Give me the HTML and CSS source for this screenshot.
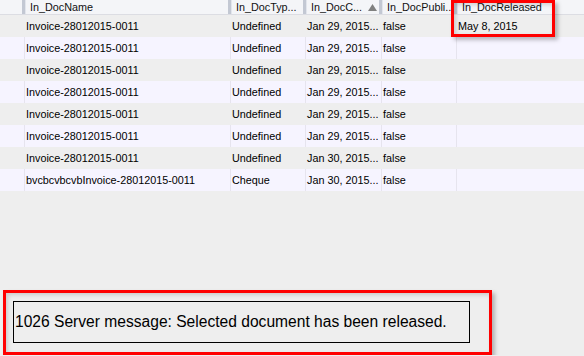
FILE: index.html
```html
<!DOCTYPE html>
<html lang="en">
<head>
    <meta charset="UTF-8">
    <title>Documents</title>
    <link rel="stylesheet" href="styles.css">
</head>
<body>
    <div class="table">
        <div class="row head">
            <div class="cell"></div>
            <div class="cell">In_DocName</div>
            <div class="cell">In_DocTyp...</div>
            <div class="cell sorted">In_DocC... <svg class="arrow" width="9" height="7" viewBox="0 0 9 7"><path d="M0 7 L4.5 0 L9 7 Z" fill="#808080"/></svg></div>
            <div class="cell">In_DocPubli...</div>
            <div class="cell">In_DocReleased</div>
        </div>
        <div class="row odd">
            <div class="cell"></div>
            <div class="cell">Invoice-28012015-0011</div>
            <div class="cell">Undefined</div>
            <div class="cell">Jan 29, 2015...</div>
            <div class="cell">false</div>
            <div class="cell">May 8, 2015</div>
        </div>
        <div class="row even">
            <div class="cell"></div>
            <div class="cell">Invoice-28012015-0011</div>
            <div class="cell">Undefined</div>
            <div class="cell">Jan 29, 2015...</div>
            <div class="cell">false</div>
            <div class="cell"></div>
        </div>
        <div class="row odd">
            <div class="cell"></div>
            <div class="cell">Invoice-28012015-0011</div>
            <div class="cell">Undefined</div>
            <div class="cell">Jan 29, 2015...</div>
            <div class="cell">false</div>
            <div class="cell"></div>
        </div>
        <div class="row even">
            <div class="cell"></div>
            <div class="cell">Invoice-28012015-0011</div>
            <div class="cell">Undefined</div>
            <div class="cell">Jan 29, 2015...</div>
            <div class="cell">false</div>
            <div class="cell"></div>
        </div>
        <div class="row odd">
            <div class="cell"></div>
            <div class="cell">Invoice-28012015-0011</div>
            <div class="cell">Undefined</div>
            <div class="cell">Jan 29, 2015...</div>
            <div class="cell">false</div>
            <div class="cell"></div>
        </div>
        <div class="row even">
            <div class="cell"></div>
            <div class="cell">Invoice-28012015-0011</div>
            <div class="cell">Undefined</div>
            <div class="cell">Jan 29, 2015...</div>
            <div class="cell">false</div>
            <div class="cell"></div>
        </div>
        <div class="row odd">
            <div class="cell"></div>
            <div class="cell">Invoice-28012015-0011</div>
            <div class="cell">Undefined</div>
            <div class="cell">Jan 30, 2015...</div>
            <div class="cell">false</div>
            <div class="cell"></div>
        </div>
        <div class="row even">
            <div class="cell"></div>
            <div class="cell">bvcbcvbcvbInvoice-28012015-0011</div>
            <div class="cell">Cheque</div>
            <div class="cell">Jan 30, 2015...</div>
            <div class="cell">false</div>
            <div class="cell"></div>
        </div>
        <div class="mark"></div>
    </div>

    <div class="callout">
        <div class="message">1026 Server message: Selected document has been released.</div>
    </div>
</body>
</html>
```

FILE: styles.css
```css
body {
    margin: 0;
    background: #eeeeee;
    font-family: "Liberation Sans", Arial, sans-serif;
    font-size: 10.8px;
    color: #000;
}
.table {
    position: relative;
}
.row {
    display: grid;
    grid-template-columns: 24px 206px 75px 76px 75px 1fr;
    height: 22px;
    align-items: stretch;
}
.cell {
    display: flex;
    align-items: center;
    white-space: nowrap;
    overflow: hidden;
    padding-left: 1px;
    border-left: 1px solid transparent;
}
.row .cell:first-child {
    border-left: none;
}
.odd {
    background: #eeeeee;
}
.even {
    background: #f6f4ff;
}
.even .cell {
    border-left-color: #e6e4ee;
}
.head {
    height: 15px;
    background: #f4f5f8;
    border-bottom: 1px solid #dcdde3;
    box-sizing: border-box;
    color: #111;
}
.head .cell {
    border-left: 3px solid #c3c8d3;
    box-shadow: inset 1px 0 0 #e2e5ec;
    padding-left: 5px;
    margin-left: -2px;
}
.head .cell:first-child {
    border-left: none;
    box-shadow: none;
    margin-left: 0;
}
.sorted .arrow {
    margin-left: 6px;
}
.mark {
    position: absolute;
    left: 451px;
    top: 0;
    width: 104px;
    height: 37px;
    box-sizing: border-box;
    border: 3px solid #ff0000;
    box-shadow: 3px 3px 4px rgba(0, 0, 0, 0.25), inset 2px 2px 4px rgba(0, 0, 0, 0.15);
}
.callout {
    display: inline-block;
    margin: 99px 0 0 3px;
    padding: 8px 19px 9px 7px;
    border: 3px solid #ff0000;
    box-shadow: 3px 3px 4px rgba(0, 0, 0, 0.25), inset 2px 2px 4px rgba(0, 0, 0, 0.15);
}
.message {
    width: 454px;
    height: 40px;
    border: 1px solid #000;
    display: flex;
    align-items: center;
    padding-left: 1px;
    box-sizing: content-box;
    font-size: 15.6px;
    white-space: nowrap;
}
```
